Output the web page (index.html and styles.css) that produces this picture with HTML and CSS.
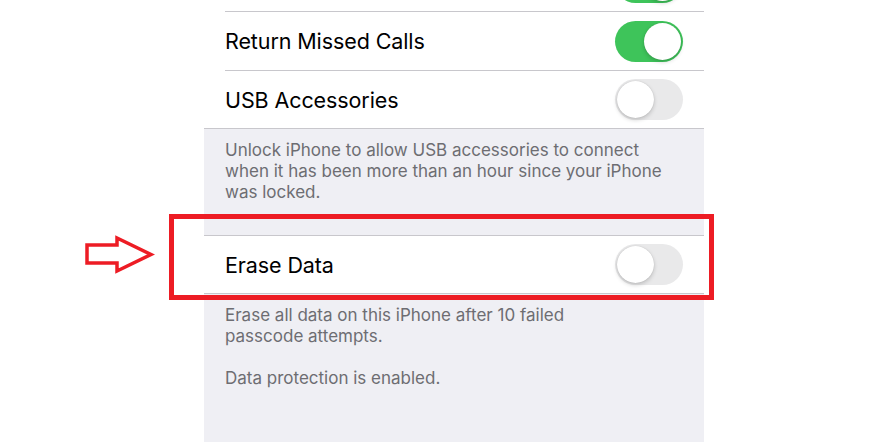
FILE: index.html
```html
<!doctype html>
<html>
<head>
	<title>Face ID &amp; Passcode</title>
	<meta charset="utf-8">
	<link rel="stylesheet" href="styles.css">
</head>
<body>
	<div class="stage">
		<div class="settings">
			<div class="group first">
				<div class="row">
					<div class="row-inner">
						<span class="label"></span>
						<span class="toggle on"><span class="knob"></span></span>
					</div>
				</div>
				<div class="row">
					<div class="row-inner">
						<span class="label">Return Missed Calls</span>
						<span class="toggle on"><span class="knob"></span></span>
					</div>
				</div>
				<div class="row last">
					<div class="row-inner">
						<span class="label">USB Accessories</span>
						<span class="toggle"><span class="knob"></span></span>
					</div>
				</div>
			</div>
			<div class="footer footer-usb">
				Unlock iPhone to allow USB accessories to connect<br>
				when it has been more than an hour since your iPhone<br>
				was locked.
			</div>

			<div class="group">
				<div class="row last">
					<div class="row-inner">
						<span class="label">Erase Data</span>
						<span class="toggle"><span class="knob"></span></span>
					</div>
				</div>
			</div>
			<div class="footer">
				Erase all data on this iPhone after 10 failed<br>
				passcode attempts.<br>
				<br>
				Data protection is enabled.
			</div>
		</div>

		<!-- markup -->
		<div class="highlight"></div>
		<svg class="arrow" width="80" height="50" viewBox="80 228 80 50">
			<polygon points="87,245 117,245 117,238 151,254.5 117,271 117,263 87,263" fill="none" stroke="#ed1c24" stroke-width="3.5" stroke-linejoin="miter"/>
		</svg>
	</div>
</body>
</html>
```

FILE: styles.css
```css
	body {
		margin: 0;
		background: #fff;
		font-family: "Inter", "Liberation Sans", sans-serif;
		overflow: hidden;
	}
	.stage {
		position: relative;
		width: 881px;
		height: 442px;
		overflow: hidden;
	}
	.settings {
		margin-left: 204px;
		width: 500px;
		height: 442px;
		background: #efeff4;
		overflow: hidden;
	}
	.group {
		background: #fff;
		border-top: 1px solid #c8c7cc;
		border-bottom: 1px solid #c8c7cc;
	}
	.group.first {
		margin-top: -48px;
	}
	.row {
		padding-left: 21px;
	}
	.row-inner {
		height: 58px;
		display: flex;
		align-items: center;
		justify-content: space-between;
		padding-right: 21px;
		border-bottom: 1px solid #c8c7cc;
	}
	.row.last .row-inner {
		border-bottom: none;
		height: 57px;
	}
	.label {
		font-size: 21.5px;
		color: #000;
		letter-spacing: -0.1px;
	}
	.toggle {
		display: flex;
		width: 68px;
		height: 41px;
		box-sizing: border-box;
		padding: 2px;
		border-radius: 21px;
		background: #e9e9ea;
	}
	.toggle.on {
		background: #3ec45a;
		justify-content: flex-end;
	}
	.knob {
		width: 37px;
		height: 37px;
		border-radius: 50%;
		background: #fff;
		box-shadow: 0 2px 4px rgba(0, 0, 0, 0.18), 0 0 1px rgba(0, 0, 0, 0.2);
	}
	.footer {
		padding: 11px 21px 0;
		font-size: 17px;
		line-height: 21px;
		color: #6d6d72;
		white-space: nowrap;
	}
	.footer-usb {
		box-sizing: border-box;
		height: 106px;
	}
	.highlight {
		position: absolute;
		left: 169px;
		top: 214px;
		width: 545px;
		height: 86px;
		box-sizing: border-box;
		border: 5px solid #ed1c24;
	}
	.arrow {
		position: absolute;
		left: 80px;
		top: 228px;
	}
```
